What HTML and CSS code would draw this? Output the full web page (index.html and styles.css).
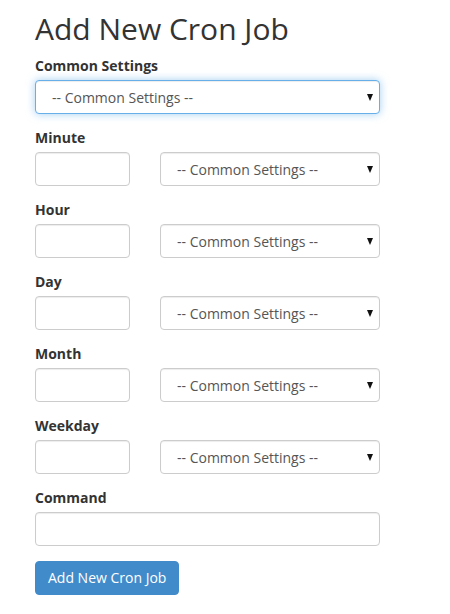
FILE: index.html
```html
<!DOCTYPE html>
<html>
<head>
<meta charset="utf-8">
<link rel="stylesheet" href="styles.css">
</head>
<body>
<div class="page">
  <h2 class="title">Add New Cron Job</h2>
  <form class="cron-form">
    <div class="form-group">
      <label class="label">Common Settings</label>
      <div class="select-wrap">
        <select class="control select focused"><option>-- Common Settings --</option></select>
      </div>
    </div>
    <div class="form-group">
      <label class="label">Minute</label>
      <div class="row">
        <input class="control small" type="text">
        <div class="select-wrap grow">
          <select class="control select"><option>-- Common Settings --</option></select>
        </div>
      </div>
    </div>
    <div class="form-group">
      <label class="label">Hour</label>
      <div class="row">
        <input class="control small" type="text">
        <div class="select-wrap grow">
          <select class="control select"><option>-- Common Settings --</option></select>
        </div>
      </div>
    </div>
    <div class="form-group">
      <label class="label">Day</label>
      <div class="row">
        <input class="control small" type="text">
        <div class="select-wrap grow">
          <select class="control select"><option>-- Common Settings --</option></select>
        </div>
      </div>
    </div>
    <div class="form-group">
      <label class="label">Month</label>
      <div class="row">
        <input class="control small" type="text">
        <div class="select-wrap grow">
          <select class="control select"><option>-- Common Settings --</option></select>
        </div>
      </div>
    </div>
    <div class="form-group">
      <label class="label">Weekday</label>
      <div class="row">
        <input class="control small" type="text">
        <div class="select-wrap grow">
          <select class="control select"><option>-- Common Settings --</option></select>
        </div>
      </div>
    </div>
    <div class="form-group last">
      <label class="label">Command</label>
      <input class="control full" type="text">
    </div>
    <button class="btn" type="button">Add New Cron Job</button>
  </form>
</div>
</body>
</html>
```

FILE: styles.css
```css
* { box-sizing: border-box; }
html, body { margin: 0; padding: 0; background: #fff; }
body {
  font-family: "Open Sans", "Liberation Sans", sans-serif;
  font-size: 14px;
  line-height: 20px;
  color: #333;
}
.page {
  width: 345px;
  margin-left: 35px;
}
.title {
  font-size: 30px;
  font-weight: 400;
  line-height: 33px;
  margin: 12px 0 10px;
  color: #333;
}
.cron-form { margin: 0; }
.form-group { margin-bottom: 13px; }
.form-group.last { margin-bottom: 15px; }
.label {
  display: block;
  font-weight: 700;
  padding-top: 1px;
  margin-bottom: 4px;
  line-height: 20px;
}
.row {
  display: flex;
  gap: 30px;
}
.control {
  display: block;
  height: 34px;
  border: 1px solid #ccc;
  border-radius: 4px;
  background: #fff;
  font-family: inherit;
  font-size: 14px;
  color: #555;
  box-shadow: inset 0 1px 1px rgba(0,0,0,.075);
  margin: 0;
  outline: none;
}
.small { width: 95px; }
.full { width: 100%; }
.select-wrap {
  position: relative;
}
.grow { flex: 1; }
.select {
  width: 100%;
  -webkit-appearance: none;
  appearance: none;
  padding: 0 24px 0 16px;
}
.select-wrap::after {
  content: "";
  position: absolute;
  right: 7px;
  top: 14px;
  border-left: 3.5px solid transparent;
  border-right: 3.5px solid transparent;
  border-top: 7px solid #111;
  pointer-events: none;
}
.focused {
  border-color: #66afe9;
  box-shadow: inset 0 1px 1px rgba(0,0,0,.075), 0 0 8px rgba(102,175,233,.6);
}
.btn {
  display: block;
  height: 34px;
  padding: 0 12px;
  border: 1px solid #428bca;
  border-radius: 4px;
  background: #428bca;
  color: #fff;
  font-family: inherit;
  font-size: 14px;
  line-height: 20px;
}
```
